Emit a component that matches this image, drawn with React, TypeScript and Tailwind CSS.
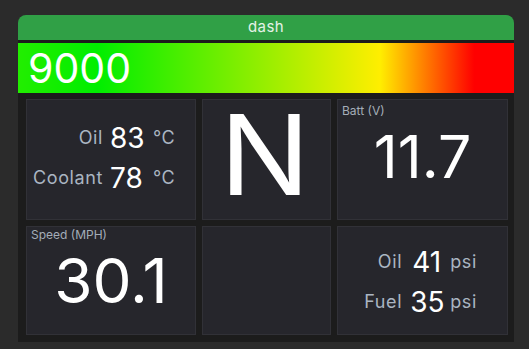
import React from "react";

const font = { fontFamily: "Inter, 'Noto Sans', sans-serif" };

function Cell({ children, className = "" }: { children?: React.ReactNode; className?: string }) {
  return (
    <div className={`relative bg-[#26262c] border border-[#313137] ${className}`}>{children}</div>
  );
}

function Row({ label, value, unit, labelW, gapA, gapB }: { label: string; value: string; unit: string; labelW: number; gapA: string; gapB: string }) {
  return (
    <div className="flex items-center h-[40px]">
      <span className="text-[18px] leading-none tracking-[0.6px] text-[#aab5c2] text-right" style={{ width: labelW }}>{label}</span>
      <span className={`text-[28px] leading-none text-white text-center w-[33px] ${gapA}`}>{value}</span>
      <span className={`text-[18px] leading-none tracking-[0.6px] text-[#aab5c2] ${gapB}`}>{unit}</span>
    </div>
  );
}

export default function App() {
  return (
    <div className="w-[529px] h-[349px] bg-[#2b2b2b] pt-[15px] pl-[18px]" style={font}>
      <div className="w-[496px] flex flex-col">
        <div className="h-[25px] bg-[#30a046] rounded-t-[8px] flex items-center justify-center text-[15px] tracking-[0.4px] text-[#e4f2e6]">
          dash
        </div>
        <div className="bg-[#1c1c1c] h-[302px] flex flex-col pt-[3px]">
          <div
            className="h-[50px] flex items-center pl-[10px] text-[41px] leading-none text-white"
            style={{
              background:
                "linear-gradient(to right, #22ee00 0%, #00ee00 16%, #ffee00 73%, #ff0000 92%, #ff0000 100%)",
            }}
          >
            9000
          </div>
          <div className="grid grid-cols-[170px_129px_171px] grid-rows-[121px_109px] gap-[6px] pl-[8px] pt-[6px]">
            <Cell className="flex flex-col justify-center pl-[5px] pb-[4px]">
              <div className="flex flex-col">
                <Row label="Oil" value="83" unit="°C" labelW={71} gapA="ml-[7px]" gapB="ml-[10px]" />
                <Row label="Coolant" value="78" unit="°C" labelW={71} gapA="ml-[7px]" gapB="ml-[10px]" />
              </div>
            </Cell>
            <Cell className="flex items-center justify-center">
              <span className="text-[111px] leading-[0.8] text-white -translate-y-[4px] -translate-x-[2px] scale-x-[1.08]">N</span>
            </Cell>
            <Cell className="flex items-center justify-center">
              <span className="absolute left-[4px] top-[5px] text-[12px] leading-[12px] text-[#a4adb8]">Batt (V)</span>
              <span className="text-[59px] leading-[0.8] text-white -translate-y-[3px]">11.7</span>
            </Cell>
            <Cell className="flex items-center justify-center">
              <span className="absolute left-[4px] top-[2px] text-[12px] leading-[12px] text-[#a4adb8]">Speed (MPH)</span>
              <span className="text-[62px] leading-[0.8] text-white">30.1</span>
            </Cell>
            <Cell />
            <Cell className="flex flex-col justify-center items-center pt-[2px]">
              <div className="flex flex-col -translate-x-[2px]">
                <Row label="Oil" value="41" unit="psi" labelW={38} gapA="ml-[8px]" gapB="ml-[7px]" />
                <Row label="Fuel" value="35" unit="psi" labelW={38} gapA="ml-[8px]" gapB="ml-[7px]" />
              </div>
            </Cell>
          </div>
        </div>
      </div>
    </div>
  );
}
